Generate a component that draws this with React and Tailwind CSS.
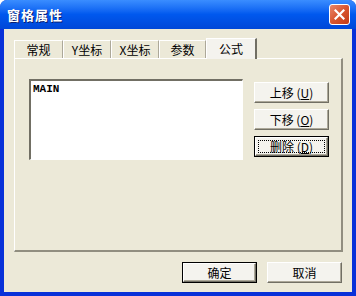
import React from 'react';

const cjk = { fontFamily: '"Noto Sans CJK SC", "Liberation Sans", sans-serif' };

const Btn = ({ children, def, focus, className = '' }) => (
    <button
        className={`relative h-[21px] w-[75px] bg-[#F4F3EE] text-[12px] leading-none text-black ${def || focus ? 'border border-black' : ''} ${className}`}
        style={cjk}
    >
        <span className="absolute inset-0 border-t border-l border-t-white border-l-white border-r border-b border-r-[#716F64] border-b-[#716F64]" />
        <span className="absolute inset-[1px] border-r border-b border-r-[#ACA899] border-b-[#ACA899]" />
        {focus && <span className="absolute inset-[3px] border border-dotted border-black" />}
        <span className="relative">{children}</span>
    </button>
);

const Tab = ({ label, active, width }) =>
    active ? (
        <div
            className="relative z-10 -mb-[1px] flex h-[21px] items-center justify-center border-l border-t border-l-white border-t-white border-r-2 border-r-[#716F64] bg-[#F4F3EE] text-[12px] text-black"
            style={{ width, ...cjk }}
        >
            {label}
        </div>
    ) : (
        <div
            className="flex h-[18px] items-center justify-center border-l border-t border-l-white border-t-white border-r border-r-[#ACA899] bg-[#ECE9D8] pt-[1px] text-[12px] text-black"
            style={{ width, ...cjk }}
        >
            {label}
        </div>
    );

const App = () => {
    return (
        <div className="flex h-[296px] w-[356px] flex-col overflow-hidden rounded-t-[7px] bg-[#0831D9]">
            {/* Title bar */}
            <div className="flex h-[29px] items-center justify-between bg-gradient-to-b from-[#3A8DFF] via-[#0058EE] to-[#0047D8] pl-[7px] pr-[6px]">
                <span
                    className="text-[13px] font-bold tracking-[1px] text-white [text-shadow:1px_1px_0_#0A1E6E]"
                    style={cjk}
                >
                    窗格属性
                </span>
                <div className="flex h-[21px] w-[21px] items-center justify-center rounded-[3px] border border-white bg-gradient-to-br from-[#E8866A] via-[#D8552E] to-[#C33A14]">
                    <svg width="11" height="11" viewBox="0 0 11 11">
                        <path d="M1.5 1.5 L9.5 9.5 M9.5 1.5 L1.5 9.5" stroke="white" strokeWidth="2.2" strokeLinecap="square" />
                    </svg>
                </div>
            </div>

            {/* Body */}
            <div className="mx-[4px] mb-[4px] flex flex-1 flex-col bg-[#ECE9D8] pl-[10px] pr-[9px] pt-[9px]">
                {/* Tabs */}
                <div className="flex items-end">
                    <Tab label="常规" width={49} />
                    <Tab label="Y坐标" width={48} />
                    <Tab label="X坐标" width={48} />
                    <Tab label="参数" width={47} />
                    <Tab label="公式" width={51} active />
                </div>

                {/* Panel */}
                <div className="flex h-[194px] border-l border-t border-l-white border-t-white border-r-2 border-b-2 border-r-[#918E80] border-b-[#918E80] pl-[14px] pt-[20px]">
                    <div
                        className="h-[81px] w-[214px] border-l-2 border-t-2 border-l-[#716F64] border-t-[#716F64] border-r border-b border-r-white border-b-white bg-white pl-[2px] pt-[2px] text-[11px] font-bold leading-[12px] text-black"
                        style={{ fontFamily: '"Liberation Mono", monospace' }}
                    >
                        MAIN
                    </div>
                    <div className="ml-[11px] mt-[3px] flex flex-col gap-[6px]">
                        <Btn>上移 (<u>U</u>)</Btn>
                        <Btn>下移 (<u>O</u>)</Btn>
                        <Btn focus>删除 (<u>D</u>)</Btn>
                    </div>
                </div>

                {/* Footer buttons */}
                <div className="mt-[10px] flex justify-end gap-[10px] pr-[1px]">
                    <Btn def>确定</Btn>
                    <Btn>取消</Btn>
                </div>
            </div>
        </div>
    );
};

export default App;
